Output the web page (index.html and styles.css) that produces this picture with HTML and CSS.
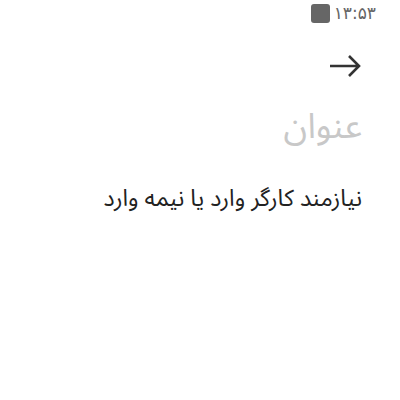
FILE: index.html
```html
<!DOCTYPE html>
<html lang="fa" dir="rtl">
<head>
<meta charset="utf-8">
<link rel="stylesheet" href="styles.css">
</head>
<body>
<div class="status">
  <span class="time">۱۳:۵۳</span>
  <span class="battery"></span>
</div>
<div class="toolbar">
  <svg class="arrow" width="34" height="24" viewBox="0 0 34 24"><path d="M2 12H31M21 2L31 12L21 22" fill="none" stroke="#333" stroke-width="2.6"/></svg>
</div>
<div class="content">
  <h1 class="title">عنوان</h1>
  <p class="body">نیازمند کارگر وارد یا نیمه وارد</p>
</div>
</body>
</html>
```
FILE: styles.css
```css
html, body { margin: 0; padding: 0; background: #fff; }
body { width: 400px; height: 400px; font-family: "Noto Sans Arabic", "Noto Naskh Arabic", "DejaVu Sans", sans-serif; color: #222; }
.status { display: flex; align-items: center; height: 26px; padding-right: 24px; gap: 4px; font-family: "DejaVu Sans", sans-serif; }
.time { font-size: 17px; color: #666; }
.battery { width: 19px; height: 19px; background: #666; border-radius: 3px; }
.toolbar { display: flex; padding: 28px 38px 0 0; height: 30px; }
.arrow { display: block; }
.content { padding-right: 38px; }
.title { margin: 21px 0 0; font-size: 35px; line-height: 44px; font-weight: normal; color: #c8c8c8; }
.body { margin: 34px 0 0; font-size: 23.3px; line-height: 32px; color: #222; }
```
